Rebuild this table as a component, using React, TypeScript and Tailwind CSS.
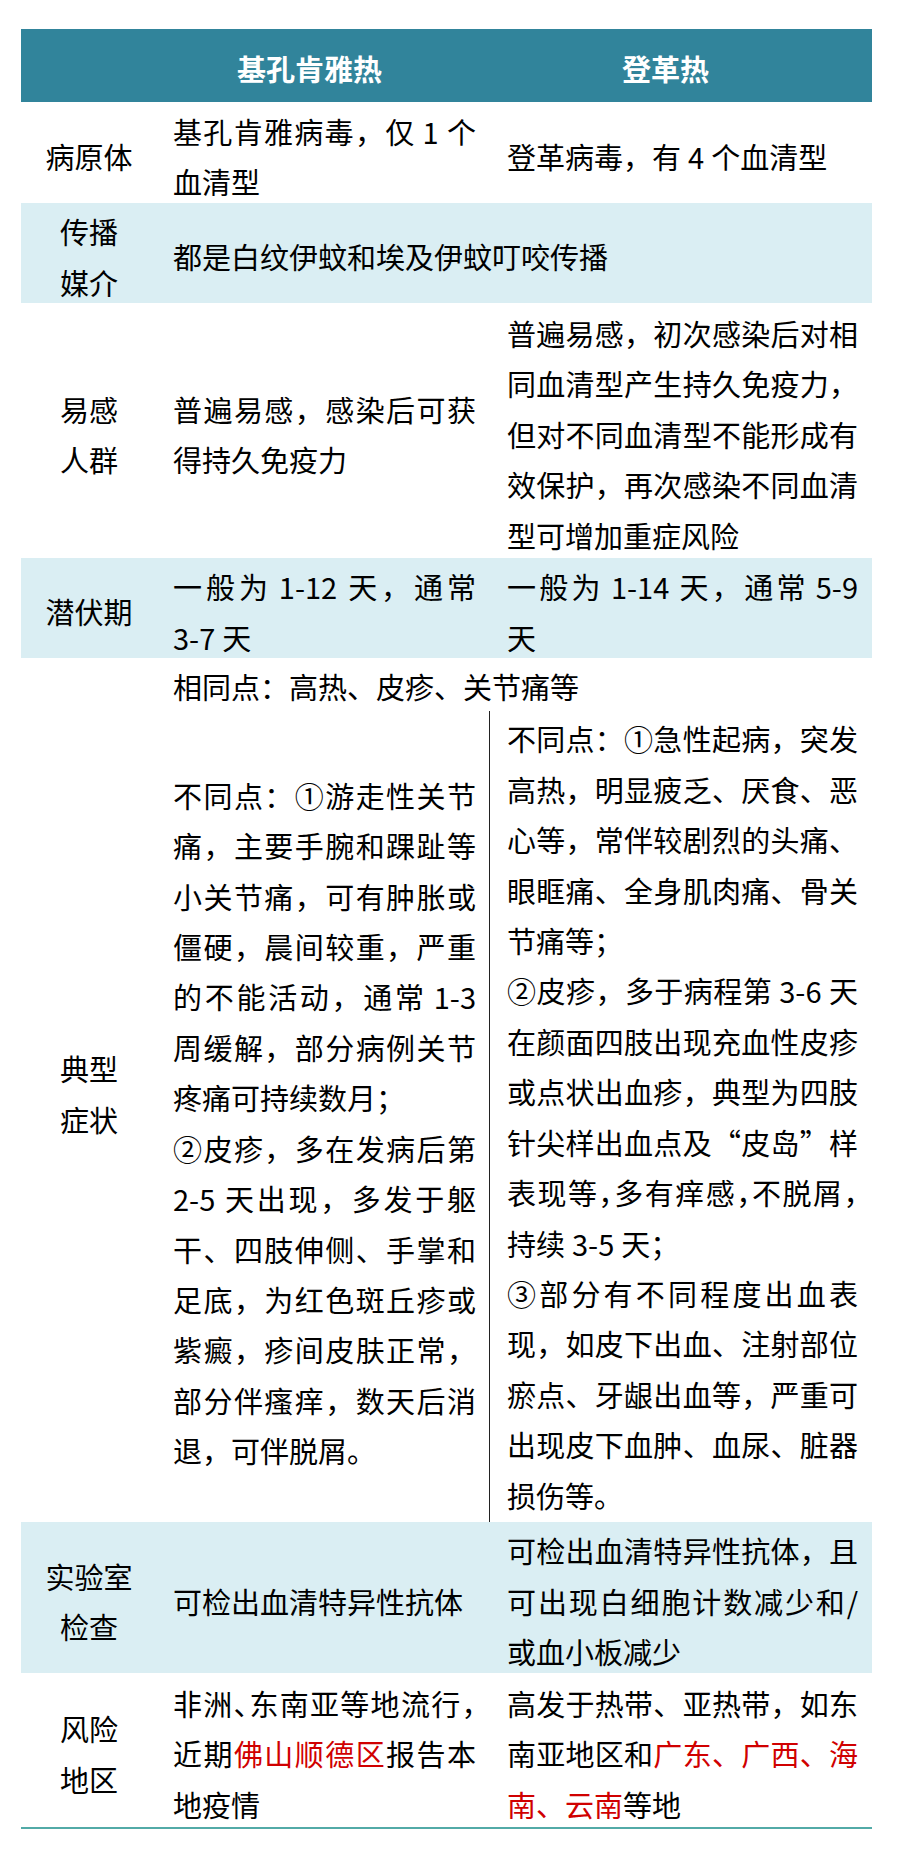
import React from "react";
import clsx from "clsx";

type LP = { children: React.ReactNode; j?: boolean; halt?: boolean };

function L({ children, j, halt }: LP) {
  return (
    <div
      className={clsx(
        "whitespace-pre",
        j && "text-justify [text-align-last:justify]",
        halt && "[font-feature-settings:'halt']"
      )}
    >
      {children}
    </div>
  );
}

function S() {
  return <span className="inline-block w-[7px]" />;
}

function R({ children }: { children: React.ReactNode }) {
  return <span className="text-[#d00000]">{children}</span>;
}

type RowP = {
  h: string;
  bg?: boolean;
  label: React.ReactNode;
  c2?: React.ReactNode;
  c3?: React.ReactNode;
  span?: React.ReactNode;
};

function Row({ h, bg, label, c2, c3, span }: RowP) {
  return (
    <div className={clsx("flex pt-[7px]", h, bg && "bg-[#DAEEF3]")}>
      <div className="flex w-[136px] shrink-0 flex-col items-center justify-center text-center">
        {label}
      </div>
      {span ? (
        <div className="flex w-[715px] shrink-0 flex-col justify-center pl-[16px]">{span}</div>
      ) : (
        <>
          <div className="flex w-[332px] shrink-0 flex-col justify-center pl-[16px] pr-[13px]">
            {c2}
          </div>
          <div className="flex w-[383px] shrink-0 flex-col justify-center pl-[18px] pr-[14px]">
            {c3}
          </div>
        </>
      )}
    </div>
  );
}

export default function App() {
  return (
    <div
      lang="zh-CN"
      className="min-h-[1851px] bg-white pl-[21px] pt-[29px] font-['Noto_Sans_CJK_SC','Noto_Sans_CJK_JP',sans-serif] text-[29px] leading-[50.4px] text-black"
    >
      <div className="w-[851px]">
        {/* header */}
        <div className="flex h-[73px] items-center bg-[#31849B] pt-[6px] font-bold text-white">
          <div className="w-[136px] shrink-0" />
          <div className="w-[332px] shrink-0 pl-[80px]">基孔肯雅热</div>
          <div className="w-[383px] shrink-0 pl-[133px]">登革热</div>
        </div>

        <Row
          h="h-[101px]"
          label={<L>病原体</L>}
          c2={
            <>
              <L j>
                基孔肯雅病毒，仅<S />1<S />个
              </L>
              <L>血清型</L>
            </>
          }
          c3={
            <L>
              登革病毒，有<S />4<S />个血清型
            </L>
          }
        />

        <Row
          h="h-[100px]"
          bg
          label={
            <>
              <L>传播</L>
              <L>媒介</L>
            </>
          }
          span={<L>都是白纹伊蚊和埃及伊蚊叮咬传播</L>}
        />

        <Row
          h="h-[255px]"
          label={
            <>
              <L>易感</L>
              <L>人群</L>
            </>
          }
          c2={
            <>
              <L j>普遍易感，感染后可获</L>
              <L>得持久免疫力</L>
            </>
          }
          c3={
            <>
              <L j>普遍易感，初次感染后对相</L>
              <L j>同血清型产生持久免疫力，</L>
              <L j>但对不同血清型不能形成有</L>
              <L j>效保护，再次感染不同血清</L>
              <L>型可增加重症风险</L>
            </>
          }
        />

        <Row
          h="h-[100px]"
          bg
          label={<L>潜伏期</L>}
          c2={
            <>
              <L j>
                一般为<S />1-12<S />天，通常
              </L>
              <L>
                3-7<S />天
              </L>
            </>
          }
          c3={
            <>
              <L j>
                一般为<S />1-14<S />天，通常<S />5-9
              </L>
              <L>天</L>
            </>
          }
        />

        {/* 典型症状 */}
        <div className="flex h-[864px]">
          <div className="flex w-[136px] shrink-0 flex-col items-center justify-center pt-[7px] text-center">
            <L>典型</L>
            <L>症状</L>
          </div>
          <div className="flex w-[715px] shrink-0 flex-col pt-[3px]">
            <div className="pl-[16px]">
              <L>相同点：高热、皮疹、关节痛等</L>
            </div>
            <div className="flex flex-1">
              <div className="flex w-[332px] shrink-0 flex-col justify-center pl-[16px] pr-[13px] pt-[12px]">
                <L j>不同点：①游走性关节</L>
                <L j>痛，主要手腕和踝趾等</L>
                <L j>小关节痛，可有肿胀或</L>
                <L j>僵硬，晨间较重，严重</L>
                <L j>
                  的不能活动，通常<S />1-3
                </L>
                <L j>周缓解，部分病例关节</L>
                <L>疼痛可持续数月；</L>
                <L j>②皮疹，多在发病后第</L>
                <L j>
                  2-5<S />天出现，多发于躯
                </L>
                <L j>干、四肢伸侧、手掌和</L>
                <L j>足底，为红色斑丘疹或</L>
                <L j>紫癜，疹间皮肤正常，</L>
                <L j>部分伴瘙痒，数天后消</L>
                <L>退，可伴脱屑。</L>
              </div>
              <div className="flex w-[383px] shrink-0 flex-col justify-center border-l border-[#222] pl-[17px] pr-[14px]">
                <L j>不同点：①急性起病，突发</L>
                <L j>高热，明显疲乏、厌食、恶</L>
                <L j>心等，常伴较剧烈的头痛、</L>
                <L j>眼眶痛、全身肌肉痛、骨关</L>
                <L>节痛等；</L>
                <L j>
                  ②皮疹，多于病程第<S />3-6<S />天
                </L>
                <L j>在颜面四肢出现充血性皮疹</L>
                <L j>或点状出血疹，典型为四肢</L>
                <L j>针尖样出血点及“皮岛”样</L>
                <L j halt>
                  表现等，多有痒感，不脱屑，
                </L>
                <L>
                  持续<S />3-5<S />天；
                </L>
                <L j>③部分有不同程度出血表</L>
                <L j>现，如皮下出血、注射部位</L>
                <L j>瘀点、牙龈出血等，严重可</L>
                <L j>出现皮下血肿、血尿、脏器</L>
                <L>损伤等。</L>
              </div>
            </div>
          </div>
        </div>

        <Row
          h="h-[151px]"
          bg
          label={
            <>
              <L>实验室</L>
              <L>检查</L>
            </>
          }
          c2={<L>可检出血清特异性抗体</L>}
          c3={
            <>
              <L j>可检出血清特异性抗体，且</L>
              <L j>可出现白细胞计数减少和/</L>
              <L>或血小板减少</L>
            </>
          }
        />

        <Row
          h="h-[154px]"
          label={
            <>
              <L>风险</L>
              <L>地区</L>
            </>
          }
          c2={
            <>
              <L j halt>
                非洲、东南亚等地流行，
              </L>
              <L j>
                近期<R>佛山顺德区</R>报告本
              </L>
              <L>地疫情</L>
            </>
          }
          c3={
            <>
              <L j>高发于热带、亚热带，如东</L>
              <L j>
                南亚地区和<R>广东、广西、海</R>
              </L>
              <L>
                <R>南、云南</R>等地
              </L>
            </>
          }
        />
        <div className="h-[2px] bg-[#52AAA7]" />
      </div>
    </div>
  );
}
